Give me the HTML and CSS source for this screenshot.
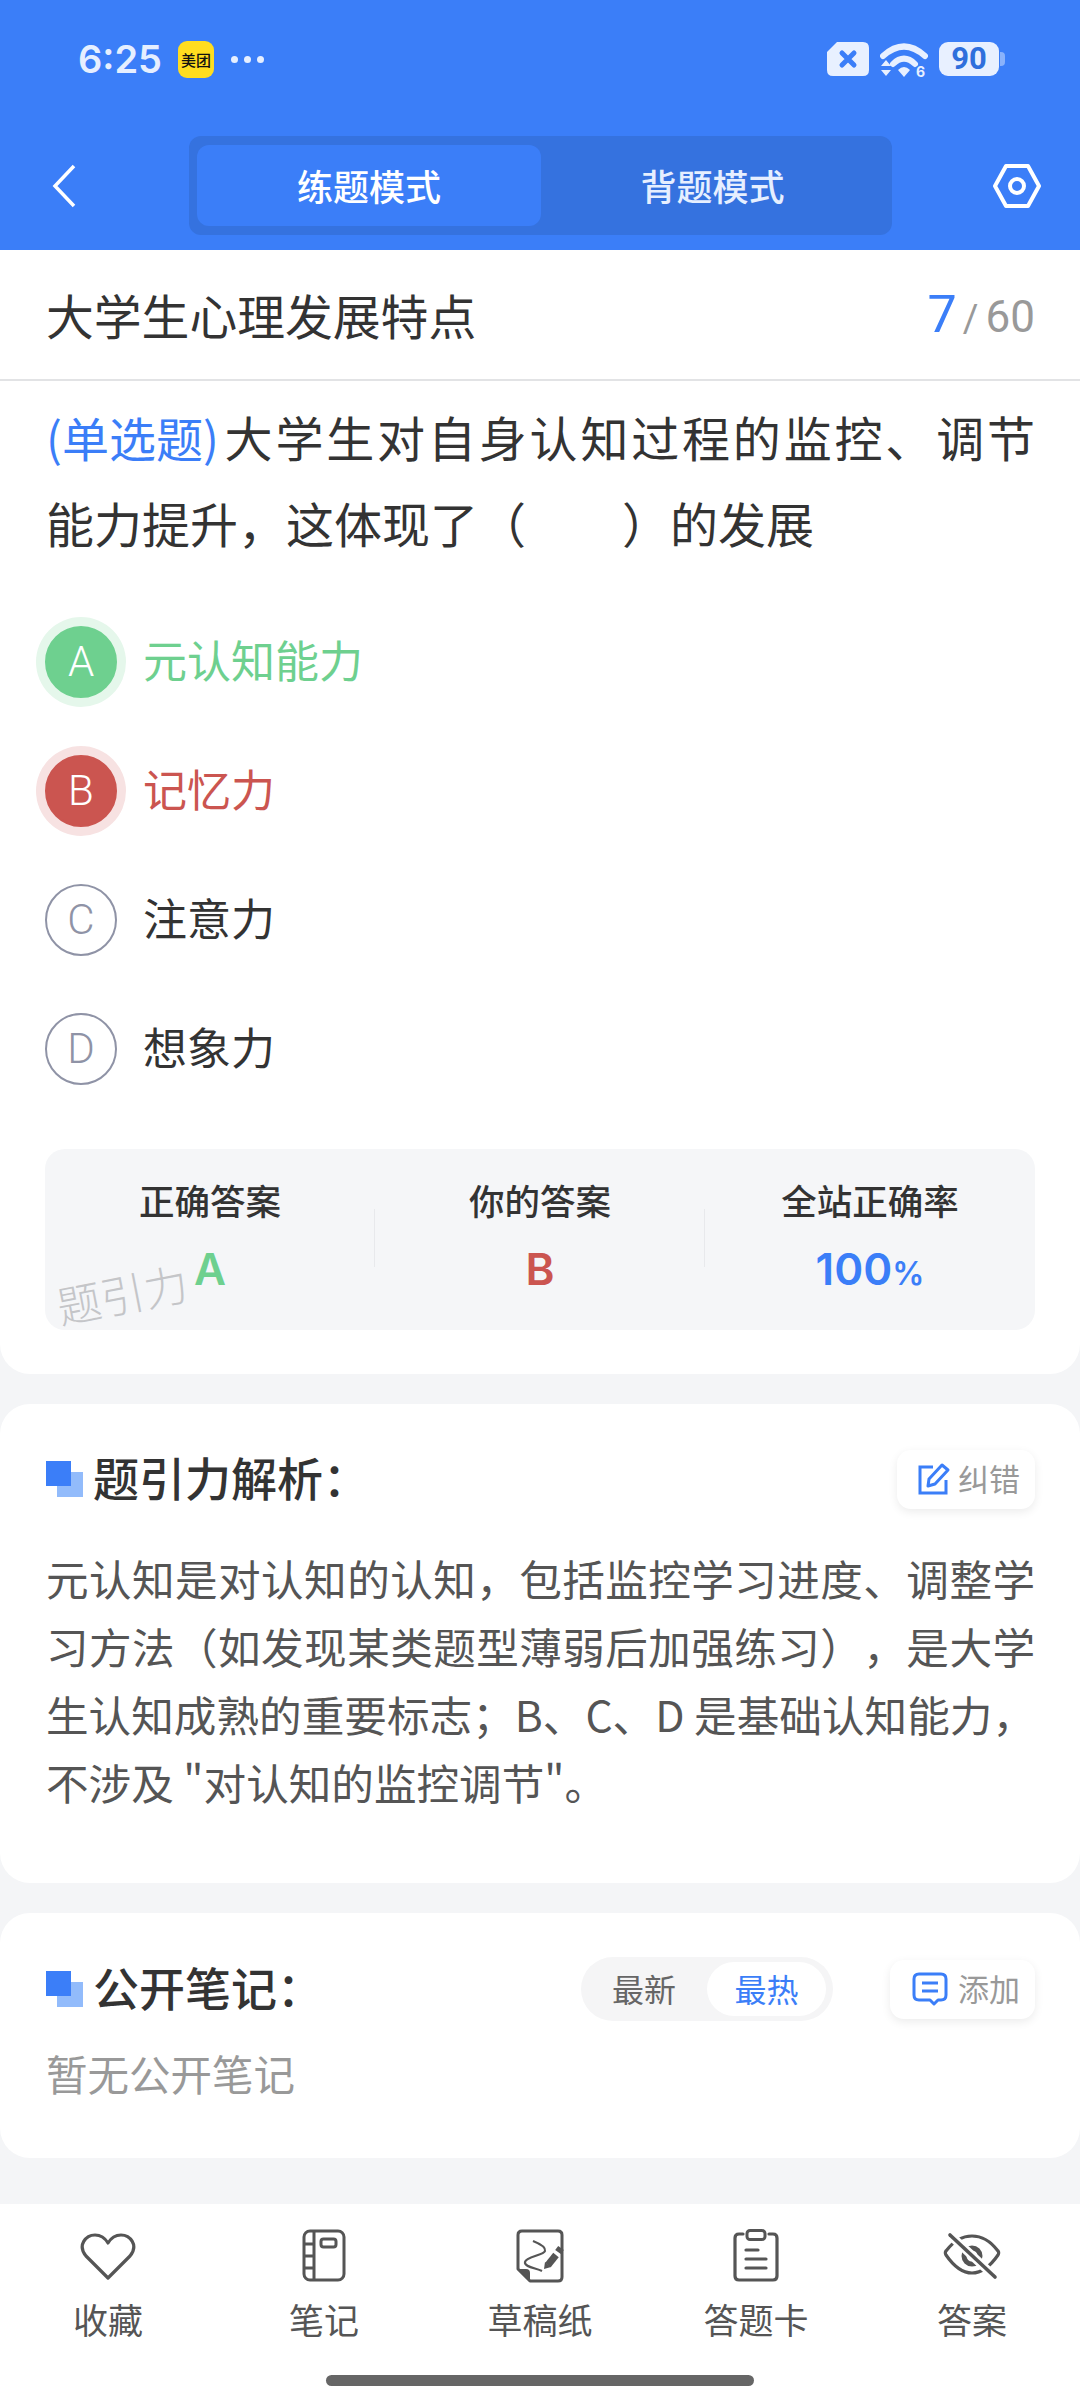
FILE: index.html
```html
<!DOCTYPE html>
<html lang="zh-CN">

<head>
    <meta charset="UTF-8">
    <meta name="viewport" content="width=device-width, initial-scale=1.0">
    <title>题引力</title>
    <link rel="stylesheet" href="styles.css">
</head>

<body>
    <header class="top">
        <div class="status">
            <span class="time">6:25</span>
            <span class="app_logo">美团</span>
            <span class="dots"><i></i><i></i><i></i></span>
            <span class="status_right">
                <svg class="sim" width="42" height="34" viewBox="0 0 42 34">
                    <path d="M10 0H36Q42 0 42 6V28Q42 34 36 34H6Q0 34 0 28V10Z" fill="#e8f0ff" />
                    <path d="M15 11L27 23M27 11L15 23" stroke="#3b7ef8" stroke-width="5" stroke-linecap="round" />
                </svg>
                <svg class="wifi" width="48" height="38" viewBox="0 0 48 38">
                    <path d="M3 14Q24 -5 45 14" fill="none" stroke="#e8f0ff" stroke-width="6" stroke-linecap="round" />
                    <path d="M13 22Q24 11 35 22" fill="none" stroke="#e8f0ff" stroke-width="6" stroke-linecap="round" />
                    <path d="M18 28Q24 22 30 28L24 35Z" fill="#e8f0ff" />
                    <path d="M1 24L6 18L11 24ZM1 28H11L6 34Z" fill="#e8f0ff" />
                    <text x="36" y="35" class="wifi_six">6</text>
                </svg>
                <span class="battery">90</span>
            </span>
        </div>
        <div class="nav">
            <svg class="back" width="24" height="44" viewBox="0 0 24 44">
                <path d="M22 2L3 22L22 42" fill="none" stroke="#fff" stroke-width="3.5" />
            </svg>
            <div class="tabs">
                <span class="tab tab_on">练题模式</span>
                <span class="tab">背题模式</span>
            </div>
            <svg class="gear" width="50" height="46" viewBox="0 0 50 46">
                <path d="M14 3H36L47 23L36 43H14L3 23Z" fill="none" stroke="#fff" stroke-width="4" stroke-linejoin="round" />
                <circle cx="25" cy="23" r="7" fill="none" stroke="#fff" stroke-width="4" />
            </svg>
        </div>
    </header>

    <section class="card card_question">
        <div class="chapter">
            <h1>大学生心理发展特点</h1>
            <p class="count"><b>7</b><i>/</i>60</p>
        </div>
        <div class="question">
            <p class="q_first"><span class="qtype">(单选题)</span><span>大学生对自身认知过程的监控、调节</span></p>
            <p>能力提升，这体现了（&emsp;&emsp;）的发展</p>
        </div>
        <ul class="options">
            <li class="right"><span class="letter">A</span><span class="opt_text">元认知能力</span></li>
            <li class="wrong"><span class="letter">B</span><span class="opt_text">记忆力</span></li>
            <li><span class="letter">C</span><span class="opt_text">注意力</span></li>
            <li><span class="letter">D</span><span class="opt_text">想象力</span></li>
        </ul>
        <div class="stats">
            <div class="stat">
                <span class="stat_name">正确答案</span>
                <span class="stat_val green">A</span>
            </div>
            <div class="stat">
                <span class="stat_name">你的答案</span>
                <span class="stat_val red">B</span>
            </div>
            <div class="stat">
                <span class="stat_name">全站正确率</span>
                <span class="stat_val blue">100<small>%</small></span>
            </div>
            <span class="watermark">题引力</span>
        </div>
    </section>

    <section class="card card_analysis">
        <div class="sec_head">
            <h2 class="sec_title"><i class="mark"></i>题引力解析：</h2>
            <a href="#" class="mini_btn">
                <svg width="34" height="34" viewBox="0 0 34 34">
                    <path d="M16 5H3V31H29V18" fill="none" stroke="#3b7ef8" stroke-width="3" />
                    <path d="M12 17L25 3L31 8L18 22L11 24Z" fill="none" stroke="#3b7ef8" stroke-width="3" stroke-linejoin="round" />
                </svg>
                纠错
            </a>
        </div>
        <p class="analysis">元认知是对认知的认知，包括监控学习进度、调整学习方法（如发现某类题型薄弱后加强练习），是大学生认知成熟的重要标志；B、C、D 是基础认知能力，不涉及 "对认知的监控调节"。</p>
    </section>

    <section class="card card_notes">
        <div class="sec_head">
            <h2 class="sec_title"><i class="mark"></i>公开笔记：</h2>
            <div class="sort">
                <span>最新</span>
                <span class="sort_on">最热</span>
            </div>
            <a href="#" class="mini_btn mini_add">
                <svg width="36" height="34" viewBox="0 0 36 34">
                    <path d="M7 2H29Q34 2 34 7V23Q34 28 29 28H26L22 32L18 28H7Q2 28 2 23V7Q2 2 7 2Z" fill="none" stroke="#3b7ef8" stroke-width="3" stroke-linejoin="round" />
                    <path d="M10 11H26M10 19H26" stroke="#3b7ef8" stroke-width="3" />
                </svg>
                添加
            </a>
        </div>
        <p class="empty">暂无公开笔记</p>
    </section>

    <footer class="bottom">
        <ul class="tools">
            <li>
                <svg width="56" height="54" viewBox="0 -3 56 54">
                    <path d="M28 46L6 24C-3 13 6 3 15 3C21 3 25 6 28 11C31 6 35 3 41 3C50 3 59 13 50 24Z" fill="none" stroke="#555" stroke-width="3.2" stroke-linejoin="round" />
                </svg>
                <span>收藏</span>
            </li>
            <li>
                <svg width="56" height="54" viewBox="0 0 56 54">
                    <rect x="8" y="2" width="40" height="49" rx="6" fill="none" stroke="#555" stroke-width="3" />
                    <path d="M18 2V51M8 15H18M8 27H18M8 39H18" stroke="#555" stroke-width="3" />
                    <rect x="25" y="10" width="15" height="8" rx="2.5" fill="none" stroke="#555" stroke-width="3" />
                </svg>
                <span>笔记</span>
            </li>
            <li>
                <svg width="56" height="54" viewBox="0 0 56 54">
                    <path d="M10 2H46Q50 2 50 6V48Q50 52 46 52H18L6 40V6Q6 2 10 2Z" fill="none" stroke="#555" stroke-width="3" stroke-linejoin="round" />
                    <path d="M6 40H14Q18 40 18 44V52Z" fill="#555" />
                    <path d="M21 12C26 14 34 18 33 22C32 26 14 28 13 33C12 38 24 39 30 42" fill="none" stroke="#555" stroke-width="2.2" />
                    <path d="M36 36L44 26" stroke="#555" stroke-width="7" />
                    <path d="M32 40L33 33L39 38Z" fill="#555" />
                    <path d="M46 23L49 19" stroke="#555" stroke-width="7" />
                </svg>
                <span>草稿纸</span>
            </li>
            <li>
                <svg width="56" height="54" viewBox="0 0 56 54">
                    <path d="M15 5H11Q7 5 7 9V47Q7 51 11 51H45Q49 51 49 47V9Q49 5 45 5H41" fill="none" stroke="#555" stroke-width="3.2" stroke-linecap="round" />
                    <rect x="19" y="1.5" width="18" height="9" rx="3" fill="none" stroke="#555" stroke-width="3" />
                    <path d="M18 21H30M18 30H38M18 39H38" stroke="#555" stroke-width="3.2" stroke-linecap="round" />
                </svg>
                <span>答题卡</span>
            </li>
            <li>
                <svg width="58" height="54" viewBox="0 0 58 54">
                    <path d="M3 26C2 24 2 23 3 22C12 10 20 7 29 7C38 7 46 10 55 22C56 23 56 24 55 26C46 39 38 44 29 44C20 44 12 39 3 26Z" fill="none" stroke="#555" stroke-width="3.2" stroke-linejoin="round" />
                    <circle cx="29" cy="27" r="8" fill="none" stroke="#555" stroke-width="5" />
                    <path d="M7 6L52 48" stroke="#fff" stroke-width="9" />
                    <path d="M7 6L52 48" stroke="#555" stroke-width="3.6" stroke-linecap="round" />
                </svg>
                <span>答案</span>
            </li>
        </ul>
        <div class="home_bar"></div>
    </footer>
</body>

</html>
```

FILE: styles.css
```css
* {
    margin: 0;
    padding: 0;
    list-style: none;
    box-sizing: border-box;
}

body {
    width: 1080px;
    height: 2400px;
    overflow: hidden;
    display: flex;
    flex-direction: column;
    background: #f4f5f7;
    color: #333;
    font-family: "Noto Sans CJK SC", "Noto Sans", sans-serif;
}

a {
    text-decoration: none;
}

/* 顶部 */
.top {
    height: 250px;
    flex-shrink: 0;
    background: #3b7ef8;
}

.status {
    height: 136px;
    padding: 38px 81px 0 78px;
    display: flex;
    align-items: flex-start;
}

.time {
    font-family: Inter, sans-serif;
    font-size: 38px;
    line-height: 42px;
    font-weight: 600;
    color: #e6efff;
}

.app_logo {
    width: 36px;
    height: 37px;
    margin: 3px 0 0 16px;
    border-radius: 9px;
    background: #ffdd1f;
    color: #111;
    font-size: 15px;
    line-height: 37px;
    text-align: center;
    white-space: nowrap;
    font-weight: 500;
}

.dots {
    display: flex;
    gap: 6px;
    margin: 18px 0 0 17px;
}

.dots i {
    width: 7px;
    height: 7px;
    border-radius: 50%;
    background: #e6efff;
}

.status_right {
    margin-left: auto;
    display: flex;
    align-items: flex-start;
    gap: 11px;
    padding-top: 4px;
}

.wifi_six {
    font-family: Inter, sans-serif;
    font-size: 14px;
    font-weight: 700;
    fill: #e8f0ff;
}

.battery {
    position: relative;
    width: 60px;
    height: 34px;
    border-radius: 9px;
    background: #e8f0ff;
    color: #2f6fdc;
    font-family: Roboto, sans-serif;
    font-size: 31px;
    line-height: 34px;
    font-weight: 700;
    text-align: center;
}

.battery::after {
    content: "";
    position: absolute;
    left: 61px;
    top: 10px;
    width: 5px;
    height: 14px;
    border-radius: 0 4px 4px 0;
    background: #8ab2fb;
}

.nav {
    height: 99px;
    padding: 0 38px 0 52px;
    display: flex;
    align-items: center;
}

.tabs {
    width: 703px;
    height: 99px;
    margin: 0 100px 0 113px;
    padding: 9px 8px;
    flex-shrink: 0;
    display: flex;
    border-radius: 12px;
    background: #3572df;
}

.tab {
    width: 344px;
    border-radius: 12px;
    color: #e6efff;
    font-size: 36px;
    line-height: 81px;
    text-align: center;
    font-weight: 500;
}

.tab + .tab {
    width: 343px;
}

.tab_on {
    background: #3b7ef8;
    color: #fff;
}

.gear {
    flex-shrink: 0;
}

/* 题目 */
.card {
    background: #fff;
    border-radius: 30px;
}

.card_question {
    height: 1124px;
    flex-shrink: 0;
    border-radius: 0 0 30px 30px;
}

.chapter {
    height: 131px;
    padding: 0 45px 0 46px;
    display: flex;
    align-items: center;
    justify-content: space-between;
    border-bottom: 2px solid #e2e3e5;
}

.chapter h1 {
    font-size: 47.8px;
    font-weight: 400;
    color: #333;
}

.count {
    font-family: Roboto, sans-serif;
    font-size: 44px;
    color: #999;
}

.count b {
    font-size: 52px;
    font-weight: 400;
    color: #3b7ef8;
}

.count i {
    margin: 0 7px 0 6px;
    font-style: normal;
    font-size: 38px;
}

.question {
    height: 172px;
    margin-top: 12px;
    padding: 0 45px 0 46px;
    font-size: 48px;
    line-height: 86px;
    color: #333;
}

.q_first {
    text-align: justify;
    text-align-last: justify;
}

.qtype {
    display: inline-block;
    margin-right: 3px;
    font-size: 47px;
    line-height: 60px;
    color: #3b7ef8;
}

.options {
    margin-top: 32px;
}

.options li {
    height: 129px;
    padding-left: 45px;
    display: flex;
    align-items: center;
    font-size: 44px;
    color: #333;
}

.opt_text {
    margin-top: -6px;
}

.letter {
    width: 72px;
    height: 72px;
    margin-right: 26px;
    border-radius: 50%;
    border: 2px solid #8f93a6;
    color: #8f93a6;
    font-family: Roboto, sans-serif;
    font-size: 42px;
    font-weight: 300;
    line-height: 68px;
    text-align: center;
}

.options .right {
    color: #6ed08f;
}

.options .wrong {
    color: #cb5550;
}

.right .letter {
    background: #6ed08f;
    border-color: #6ed08f;
    color: #fff;
    box-shadow: 0 0 0 9px #e5f7eb;
}

.wrong .letter {
    background: #cb5550;
    border-color: #cb5550;
    color: #fff;
    box-shadow: 0 0 0 9px #f7e2e2;
}

.stats {
    position: relative;
    height: 181px;
    margin: 36px 45px 0;
    display: flex;
    border-radius: 20px;
    background: #f5f6f8;
}

.stat {
    position: relative;
    flex: 1;
    padding-top: 27px;
    display: flex;
    flex-direction: column;
    align-items: center;
}

.stat + .stat::before {
    content: "";
    position: absolute;
    left: -1px;
    top: 60px;
    width: 1px;
    height: 58px;
    background: #e8e9ec;
}

.stat_name {
    font-size: 35.5px;
    line-height: 48px;
    font-weight: 500;
    color: #333;
}

.stat_val {
    margin-top: 19px;
    font-family: Inter, sans-serif;
    font-size: 44px;
    line-height: 52px;
    font-weight: 600;
}

.stat_val small {
    font-size: 32px;
}

.green {
    color: #6ed08f;
}

.red {
    color: #cb5550;
}

.blue {
    color: #3b7ef8;
}

.watermark {
    position: absolute;
    left: 11px;
    top: 118px;
    font-size: 44px;
    line-height: 52px;
    font-weight: 300;
    color: #c4c5c8;
    transform: rotate(-11deg);
}

/* 解析、笔记 */
.card_analysis {
    height: 479px;
    margin-top: 30px;
    flex-shrink: 0;
    padding: 45px 45px 0 46px;
}

.card_notes {
    height: 245px;
    margin-top: 30px;
    flex-shrink: 0;
    padding: 46px 45px 0 46px;
}

.sec_head {
    height: 60px;
    display: flex;
    align-items: center;
}

.sec_title {
    padding-bottom: 6px;
    display: flex;
    align-items: center;
    font-size: 46px;
    font-weight: 500;
    color: #333;
}

.mark {
    position: relative;
    width: 37px;
    height: 36px;
    margin: 6px 10px 0 0;
    background: linear-gradient(#92bbfb, #92bbfb) 11px 11px / 26px 25px no-repeat;
}

.mark::before {
    content: "";
    position: absolute;
    left: 0;
    top: 0;
    width: 25px;
    height: 25px;
    background: #3b7ef8;
}

.mini_btn {
    margin-left: auto;
    height: 59px;
    padding: 0 15px 3px 20px;
    display: flex;
    align-items: center;
    gap: 7px;
    border-radius: 14px;
    background: #fff;
    box-shadow: 0 3px 10px rgba(0, 0, 0, 0.08);
    color: #999;
    font-size: 31px;
}

.mini_btn svg {
    margin-top: 3px;
}

.mini_add {
    margin-left: 57px;
    padding-left: 22px;
    gap: 10px;
}

.analysis {
    margin-top: 35px;
    font-size: 42.6px;
    line-height: 68px;
    text-align: justify;
    text-spacing-trim: space-all;
    color: #555;
}

.sort {
    margin-left: auto;
    width: 252px;
    height: 64px;
    padding: 5px 7px 5px 0;
    display: flex;
    align-items: center;
    border-radius: 32px;
    background: #f5f5f6;
    font-size: 32px;
    color: #666;
}

.sort span {
    width: 126px;
    padding-bottom: 2px;
    line-height: 52px;
    text-align: center;
}

.sort .sort_on {
    width: 119px;
    border-radius: 27px;
    background: #fff;
    color: #3b7ef8;
}

.empty {
    margin-top: 24px;
    font-size: 41.5px;
    line-height: 60px;
    color: #999;
}

/* 底部 */
.bottom {
    margin-top: auto;
    height: 196px;
    flex-shrink: 0;
    background: #fff;
}

.tools {
    display: flex;
    padding-top: 25px;
}

.tools li {
    flex: 1;
    display: flex;
    flex-direction: column;
    align-items: center;
    color: #555;
    font-size: 35px;
}

.tools svg {
    height: 54px;
    flex-shrink: 0;
}

.tools span {
    margin-top: 11px;
    line-height: 50px;
}

.home_bar {
    width: 428px;
    height: 11px;
    margin: 31px auto 0;
    border-radius: 6px;
    background: #666;
}
```
